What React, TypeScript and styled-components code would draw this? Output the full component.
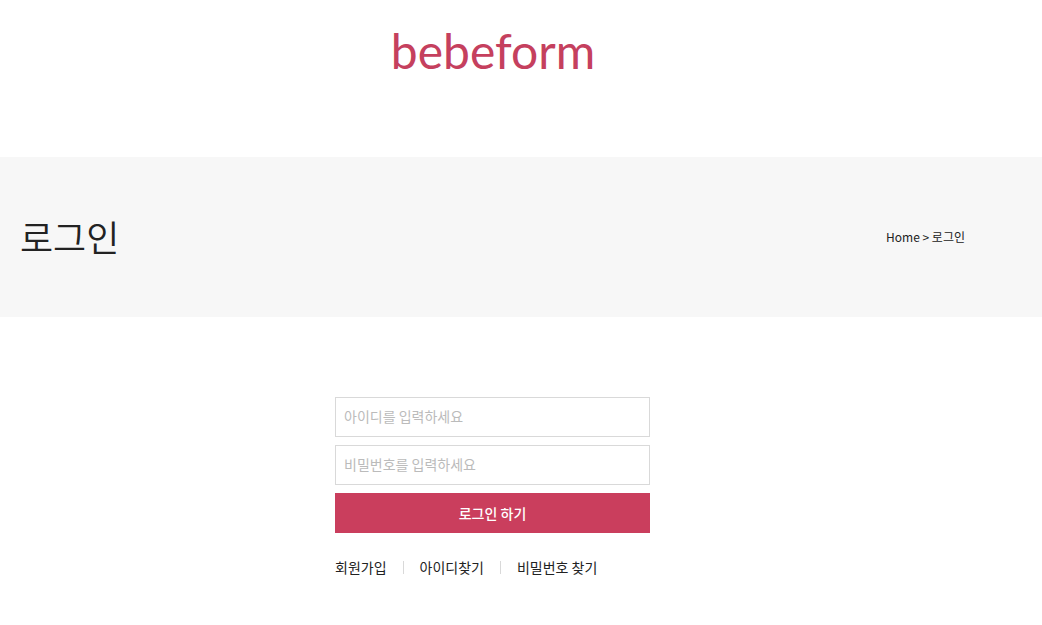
import React from "react";
import styled, { createGlobalStyle } from "styled-components";

const GlobalStyle = createGlobalStyle`
  * { box-sizing: border-box; }
  body {
    margin: 0;
    background: #fff;
    color: #222;
    font-family: "Noto Sans CJK KR", "Noto Sans", sans-serif;
    font-size: 14px;
  }
  a { color: inherit; text-decoration: none; }
`;

const Header = styled.header`
  display: flex;
  justify-content: center;
  height: 157px;
  padding: 20px 76px 0 20px;
`;

const Logo = styled.a`
  color: #c5405e;
  font-family: Lato, sans-serif;
  font-size: 48px;
  font-weight: 400;
  line-height: 62px;
  height: 62px;
`;

const TitleBand = styled.section`
  display: flex;
  align-items: center;
  justify-content: space-between;
  height: 160px;
  padding: 0 77px 0 20px;
  background: #f7f7f7;
`;

const Title = styled.h1`
  margin: 0;
  padding-bottom: 2px;
  font-size: 36px;
  font-weight: 350;
  line-height: 52px;
`;

const Breadcrumb = styled.nav`
  font-size: 12px;
  line-height: 18px;
`;

const Main = styled.main`
  display: flex;
  justify-content: center;
  padding: 80px 77px 40px 20px;
`;

const LoginForm = styled.form`
  display: flex;
  flex-direction: column;
  gap: 8px;
  width: 315px;
`;

const TextField = styled.input`
  width: 100%;
  height: 40px;
  padding: 0 8px 2px;
  border: 1px solid #d9d9d9;
  border-radius: 0;
  background: #fff;
  color: #222;
  font: inherit;
  outline-color: #ca3e5d;

  &::placeholder {
    color: #bbb;
    opacity: 1;
  }
`;

const SubmitButton = styled.button`
  height: 40px;
  padding: 0;
  border: 0;
  background: #ca3e5d;
  color: #fff;
  font: inherit;
  font-weight: 500;
  cursor: pointer;
`;

const Links = styled.ul`
  display: flex;
  align-items: center;
  margin: 16px 0 0;
  padding: 0;
  list-style: none;
  line-height: 20px;
`;

const LinkItem = styled.li`
  display: flex;
  align-items: center;

  & + &::before {
    content: "";
    width: 1px;
    height: 13px;
    margin: 0 16px;
    background: #d9d9d9;
  }
`;

const accountLinks = ["회원가입", "아이디찾기", "비밀번호 찾기"];

export default function App() {
  return (
    <>
      <GlobalStyle />
      <Header>
        <Logo href="#">bebeform</Logo>
      </Header>
      <TitleBand>
        <Title>로그인</Title>
        <Breadcrumb>
          <a href="#">Home</a> &gt; 로그인
        </Breadcrumb>
      </TitleBand>
      <Main>
        <LoginForm onSubmit={(e) => e.preventDefault()}>
          <TextField type="text" aria-label="아이디" placeholder="아이디를 입력하세요" />
          <TextField type="password" aria-label="비밀번호" placeholder="비밀번호를 입력하세요" />
          <SubmitButton type="submit">로그인 하기</SubmitButton>
          <Links>
            {accountLinks.map((label) => (
              <LinkItem key={label}>
                <a href="#">{label}</a>
              </LinkItem>
            ))}
          </Links>
        </LoginForm>
      </Main>
    </>
  );
}
